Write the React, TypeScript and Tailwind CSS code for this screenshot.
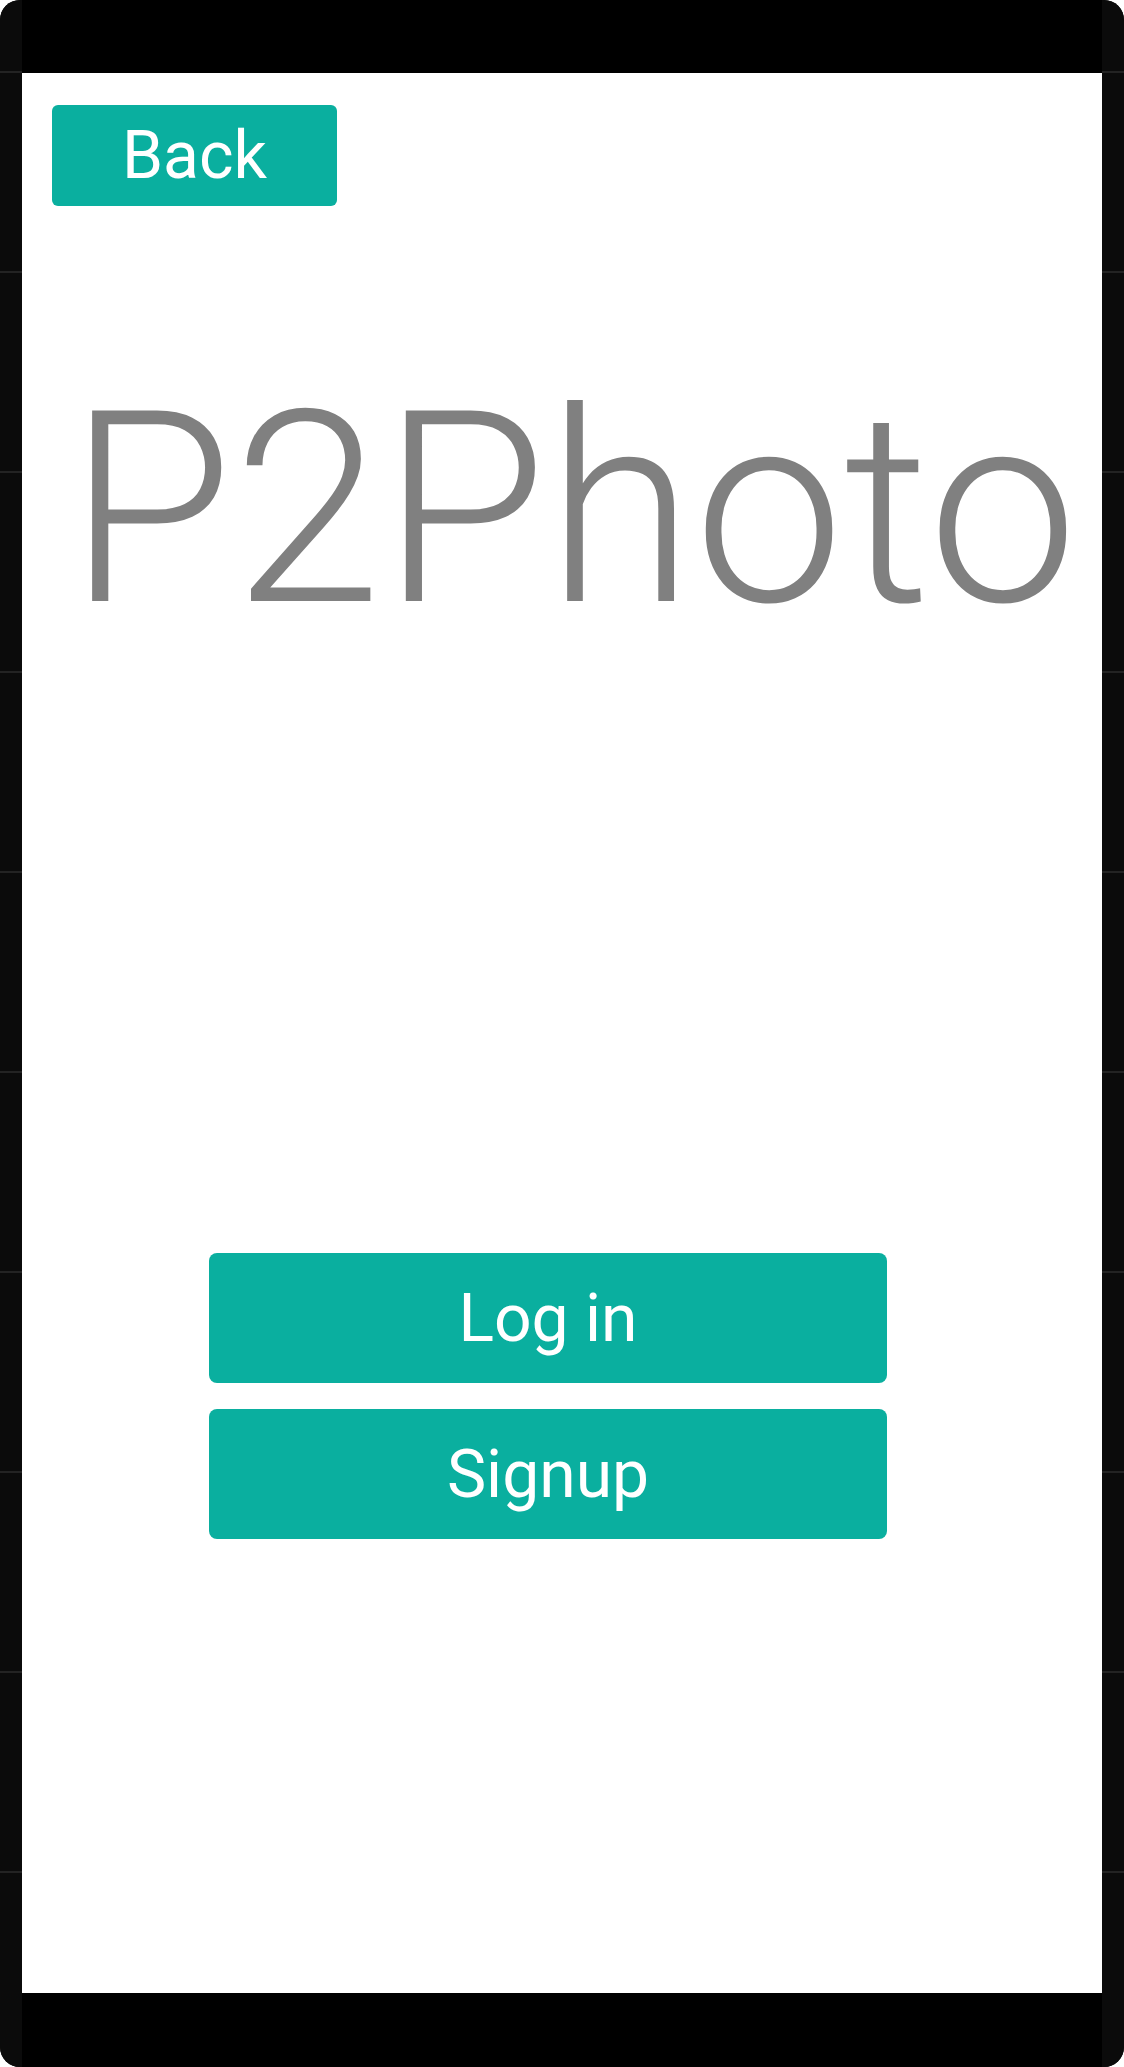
export default function App() {
  return (
    <div className="w-[1124px] h-[2067px] bg-white">
      <div className="flex h-full w-full overflow-hidden rounded-[20px] bg-[#0b0b0b] font-['Roboto',sans-serif]">
        <div className="w-[22px] shrink-0 bg-[repeating-linear-gradient(to_bottom,#0b0b0b_0px,#0b0b0b_71px,#232323_71px,#232323_73px,#0b0b0b_73px,#0b0b0b_200px)]" />
        <div className="flex flex-1 flex-col">
          <div className="h-[73px] shrink-0 bg-black" />
          <main className="flex flex-1 flex-col bg-white">
            <div className="pl-[30px] pt-[32px]">
              <button className="flex h-[101px] w-[285px] items-center justify-center rounded-[6px] bg-[#0aaf9f] text-[66px] text-white">
                Back
              </button>
            </div>
            <h1 className="mt-[169px] pl-[46px] text-[268px] font-light leading-none text-[#808080]">
              P2Photo
            </h1>
            <div className="mt-[610px] flex flex-col gap-[26px] pl-[187px]">
              <button className="flex h-[130px] w-[678px] items-center justify-center rounded-[8px] bg-[#0aaf9f] text-[66px] text-white">
                Log in
              </button>
              <button className="flex h-[130px] w-[678px] items-center justify-center rounded-[8px] bg-[#0aaf9f] text-[66px] text-white">
                Signup
              </button>
            </div>
          </main>
          <div className="h-[74px] shrink-0 bg-black" />
        </div>
        <div className="w-[22px] shrink-0 bg-[repeating-linear-gradient(to_bottom,#0b0b0b_0px,#0b0b0b_71px,#232323_71px,#232323_73px,#0b0b0b_73px,#0b0b0b_200px)]" />
      </div>
    </div>
  );
}
